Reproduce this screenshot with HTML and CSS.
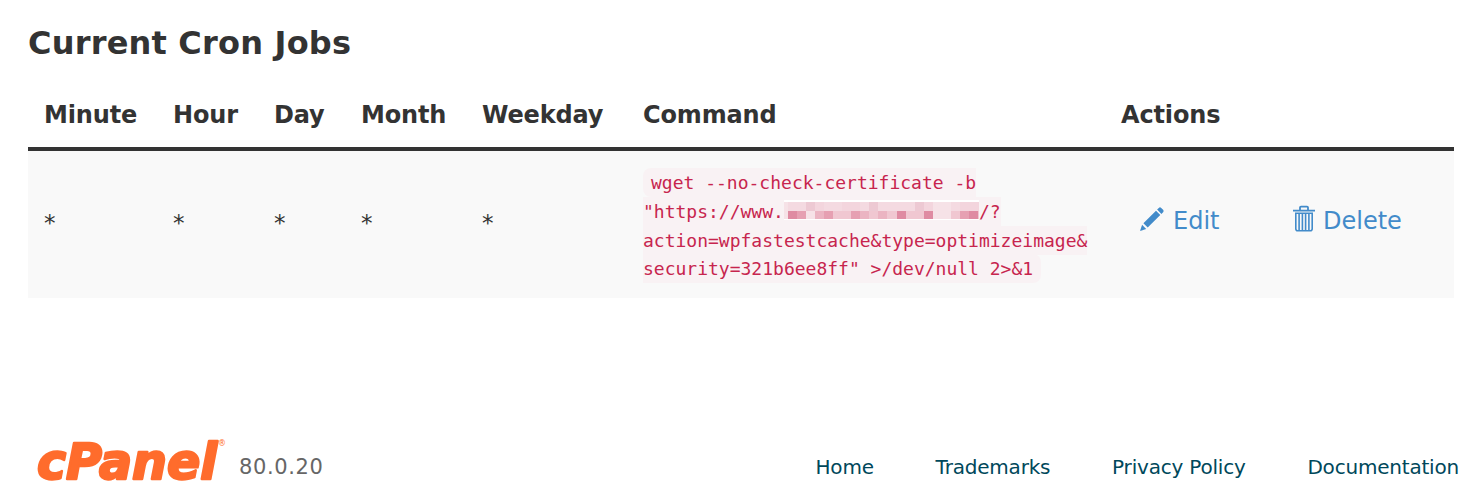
FILE: index.html
```html
<!DOCTYPE html>
<html lang="en">
<head>
    <meta charset="UTF-8">
    <meta name="viewport" content="width=device-width, initial-scale=1.0">
    <title>Cron Jobs</title>
    <link rel="stylesheet" href="styles.css">
</head>
<body>
    <div class="content">
        <h2>Current Cron Jobs</h2>
        <table class="jobs">
            <colgroup>
                <col class="col-minute">
                <col class="col-hour">
                <col class="col-day">
                <col class="col-month">
                <col class="col-weekday">
                <col class="col-command">
                <col>
            </colgroup>
            <thead>
                <tr>
                    <th>Minute</th>
                    <th>Hour</th>
                    <th>Day</th>
                    <th>Month</th>
                    <th>Weekday</th>
                    <th>Command</th>
                    <th>Actions</th>
                </tr>
            </thead>
            <tbody>
                <tr>
                    <td>*</td>
                    <td>*</td>
                    <td>*</td>
                    <td>*</td>
                    <td>*</td>
                    <td class="command"><code>wget --no-check-certificate -b<br>"https://www.<svg class="masked" viewBox="0 0 195 20" shape-rendering="crispEdges">
                        <rect width="195" height="20" fill="#fff"/>
                        <rect y="2" width="195" height="9" fill="#f4dae1"/>
                        <rect y="11" width="195" height="8" fill="#f0c7d1"/>
                        <path fill="#edc9d3" d="M22 2h9v9h-9zM85 2h9v9h-9zM131 2h9v9h-9z"/>
                        <path fill="#f3d5dd" d="M31 2h9v9h-9zM58 2h18v9H58zM140 2h9v9h-9zM176 2h19v9h-19z"/>
                        <path fill="#f6e2e7" d="M0 2h4v17H0zM149 2h18v17h-18zM22 11h9v8h-9z"/>
                        <path fill="#df8ba2" d="M4 11h9v8H4zM113 11h9v8h-9zM140 11h9v8h-9zM185 11h9v8h-9z"/>
                        <path fill="#e6a0b2" d="M13 11h9v8h-9zM40 11h9v8h-9zM67 11h9v8h-9zM176 11h9v8h-9z"/>
                        <path fill="#ebb4c2" d="M31 11h9v8h-9zM76 11h9v8h-9zM94 11h9v8h-9z"/>
                    </svg>/?<br>action=wpfastestcache&amp;type=optimizeimage&amp;<br>security=321b6ee8ff" &gt;/dev/null 2&gt;&amp;1</code></td>
                    <td>
                        <div class="actions">
                            <a class="edit">
                                <svg width="26" height="26" viewBox="0 0 26 26" fill="#428bca">
                                    <path d="M1 25l2.1-6.2 4.1 4.1zM4.4 17.3L17 4.7l4.3 4.3L8.7 21.6zM18.1 3.6l1.7-1.7q1.2-1.2 2.4 0l1.9 1.9q1.2 1.2 0 2.4l-1.7 1.7z"/>
                                </svg>
                                <span>Edit</span>
                            </a>
                            <a class="delete">
                                <svg width="22" height="27" viewBox="0 0 22 27" fill="none" stroke="#428bca">
                                    <path stroke-width="1.8" d="M0 5.6h22M7 5V2.6q0-1 1-1h6q1 0 1 1V5"/>
                                    <path stroke-width="1.6" d="M2.8 8.3h16.4v15.5q0 2-2 2H4.8q-2 0-2-2zM6.1 8v17M9.4 8v17M12.6 8v17M15.9 8v17"/>
                                </svg>
                                <span>Delete</span>
                            </a>
                        </div>
                    </td>
                </tr>
            </tbody>
        </table>
    </div>
    <footer>
        <div class="brand">
            <svg class="logo" width="190" height="56" viewBox="0 0 190 56">
                <text class="word" x="1" y="42" textLength="180" lengthAdjust="spacingAndGlyphs">cPanel</text>
                <text class="reg" x="182" y="9">®</text>
            </svg>
            <span class="version">80.0.20</span>
        </div>
        <ul>
            <li>Home</li>
            <li>Trademarks</li>
            <li>Privacy Policy</li>
            <li>Documentation</li>
        </ul>
    </footer>
</body>
</html>
```
FILE: styles.css
```css
body {
    margin: 0;
    height: 494px;
    overflow: hidden;
    background-color: #fff;
    color: #333;
    font-family: Verdana, "DejaVu Sans", sans-serif;
}

.content {
    box-sizing: border-box;
    height: 437px;
    padding: 22px 30px 0 28px;
}

h2 {
    margin: 0;
    font-size: 32px;
    line-height: 42px;
    letter-spacing: 0.2px;
}

.jobs {
    width: 1426px;
    margin-top: 16px;
    table-layout: fixed;
    border-collapse: separate;
    border-spacing: 0;
}

.col-minute { width: 129px; }
.col-hour { width: 101px; }
.col-day { width: 87px; }
.col-month { width: 121px; }
.col-weekday { width: 161px; }
.col-command { width: 478px; }

th {
    box-sizing: border-box;
    height: 71px;
    padding: 4px 0 0 16px;
    border-bottom: 4px solid #333;
    font-size: 24px;
    letter-spacing: -0.15px;
    line-height: 63px;
    text-align: left;
    white-space: nowrap;
}

td {
    box-sizing: border-box;
    height: 147px;
    padding: 0 0 4px 16px;
    background-color: #f9f9f9;
    font-size: 23px;
    vertical-align: middle;
}

td.command {
    padding: 4px 0 0 16px;
    font-size: 20px;
}

code {
    padding: 4px 8px;
    border-radius: 8px;
    background-color: #f9f2f4;
    color: #c7254e;
    font-family: "DejaVu Sans Mono", monospace;
    font-size: 18px;
    line-height: 28.6px;
    white-space: nowrap;
}

.masked {
    width: 195px;
    height: 20px;
    margin: -3px 0;
    vertical-align: 1px;
}

.actions {
    display: flex;
    padding: 0 0 4px 18px;
    color: #428bca;
    font-size: 24px;
}

.actions a {
    display: flex;
    align-items: center;
    gap: 8px;
}

.actions svg {
    margin-bottom: 4px;
}

.edit {
    width: 154px;
}

footer {
    display: flex;
    justify-content: space-between;
    padding: 0 25px 0 36px;
    font-size: 20px;
}

.brand {
    display: flex;
    gap: 13px;
}

.logo {
    overflow: visible;
}

.logo .word {
    fill: #ff6c2c;
    stroke: #ff6c2c;
    stroke-width: 2.4;
    stroke-linejoin: round;
    font-family: "DejaVu Sans", sans-serif;
    font-size: 49px;
    font-style: italic;
    font-weight: bold;
}

.logo .reg {
    fill: #ff6c2c;
    font-size: 8px;
}

.version {
    color: #666;
    font-size: 21px;
    letter-spacing: 0.6px;
    line-height: 61px;
}

ul {
    display: flex;
    gap: 61.8px;
    margin: 0;
    padding: 0;
    list-style: none;
    color: #00485b;
    letter-spacing: -0.2px;
    line-height: 61px;
}
```
